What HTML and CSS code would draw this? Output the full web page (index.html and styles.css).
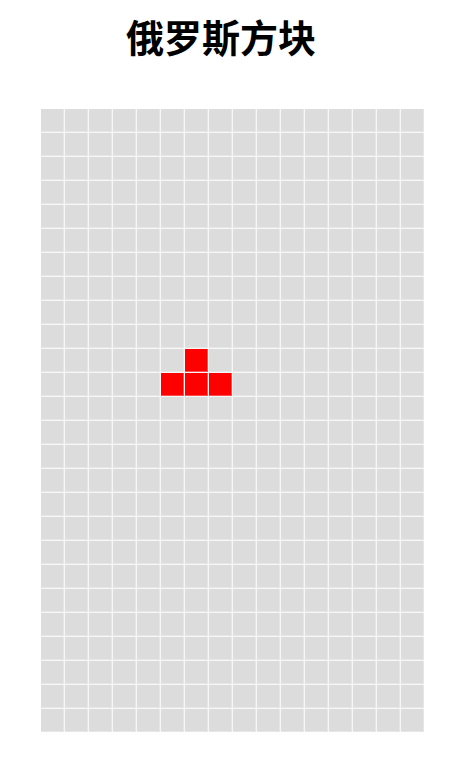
FILE: index.html
```html
<!DOCTYPE html>
<html lang="zh">
<head>
<meta charset="utf-8">
<title>俄罗斯方块</title>
<link rel="stylesheet" href="styles.css">
</head>
<body>
<div class="page">
  <h1 class="title">俄罗斯方块</h1>
  <div class="board" id="board"></div>
</div>
<script src="app.js"></script>
</body>
</html>
```
FILE: styles.css
```css
html, body {
  margin: 0;
  padding: 0;
  background: #ffffff;
}
.page {
  display: flex;
  flex-direction: column;
  align-items: flex-start;
  padding: 0 0 0 41px;
}
.title {
  margin: 11px 0 0 0;
  width: 360px;
  text-align: center;
  font-family: "Noto Sans CJK SC", sans-serif;
  font-weight: 700;
  font-size: 38px;
  line-height: 50px;
  color: #000;
}
.board {
  margin-top: 48px;
  display: grid;
  grid-template-columns: repeat(16, 23px);
  grid-auto-rows: 23px;
  gap: 1px;
  background: #f7f7f7;
}
.cell {
  background: #dcdcdc;
  box-shadow: inset -1px -1px 0 rgba(255, 255, 255, 0.3);
}
.cell.on {
  background: #ff0000;
}
```
FILE: app.js
```js
(function () {
  var board = document.getElementById('board');
  var on = { '10,6': 1, '11,5': 1, '11,6': 1, '11,7': 1 };
  for (var r = 0; r < 26; r++) {
    for (var c = 0; c < 16; c++) {
      var d = document.createElement('div');
      d.className = 'cell' + (on[r + ',' + c] ? ' on' : '');
      board.appendChild(d);
    }
  }
})();
```
